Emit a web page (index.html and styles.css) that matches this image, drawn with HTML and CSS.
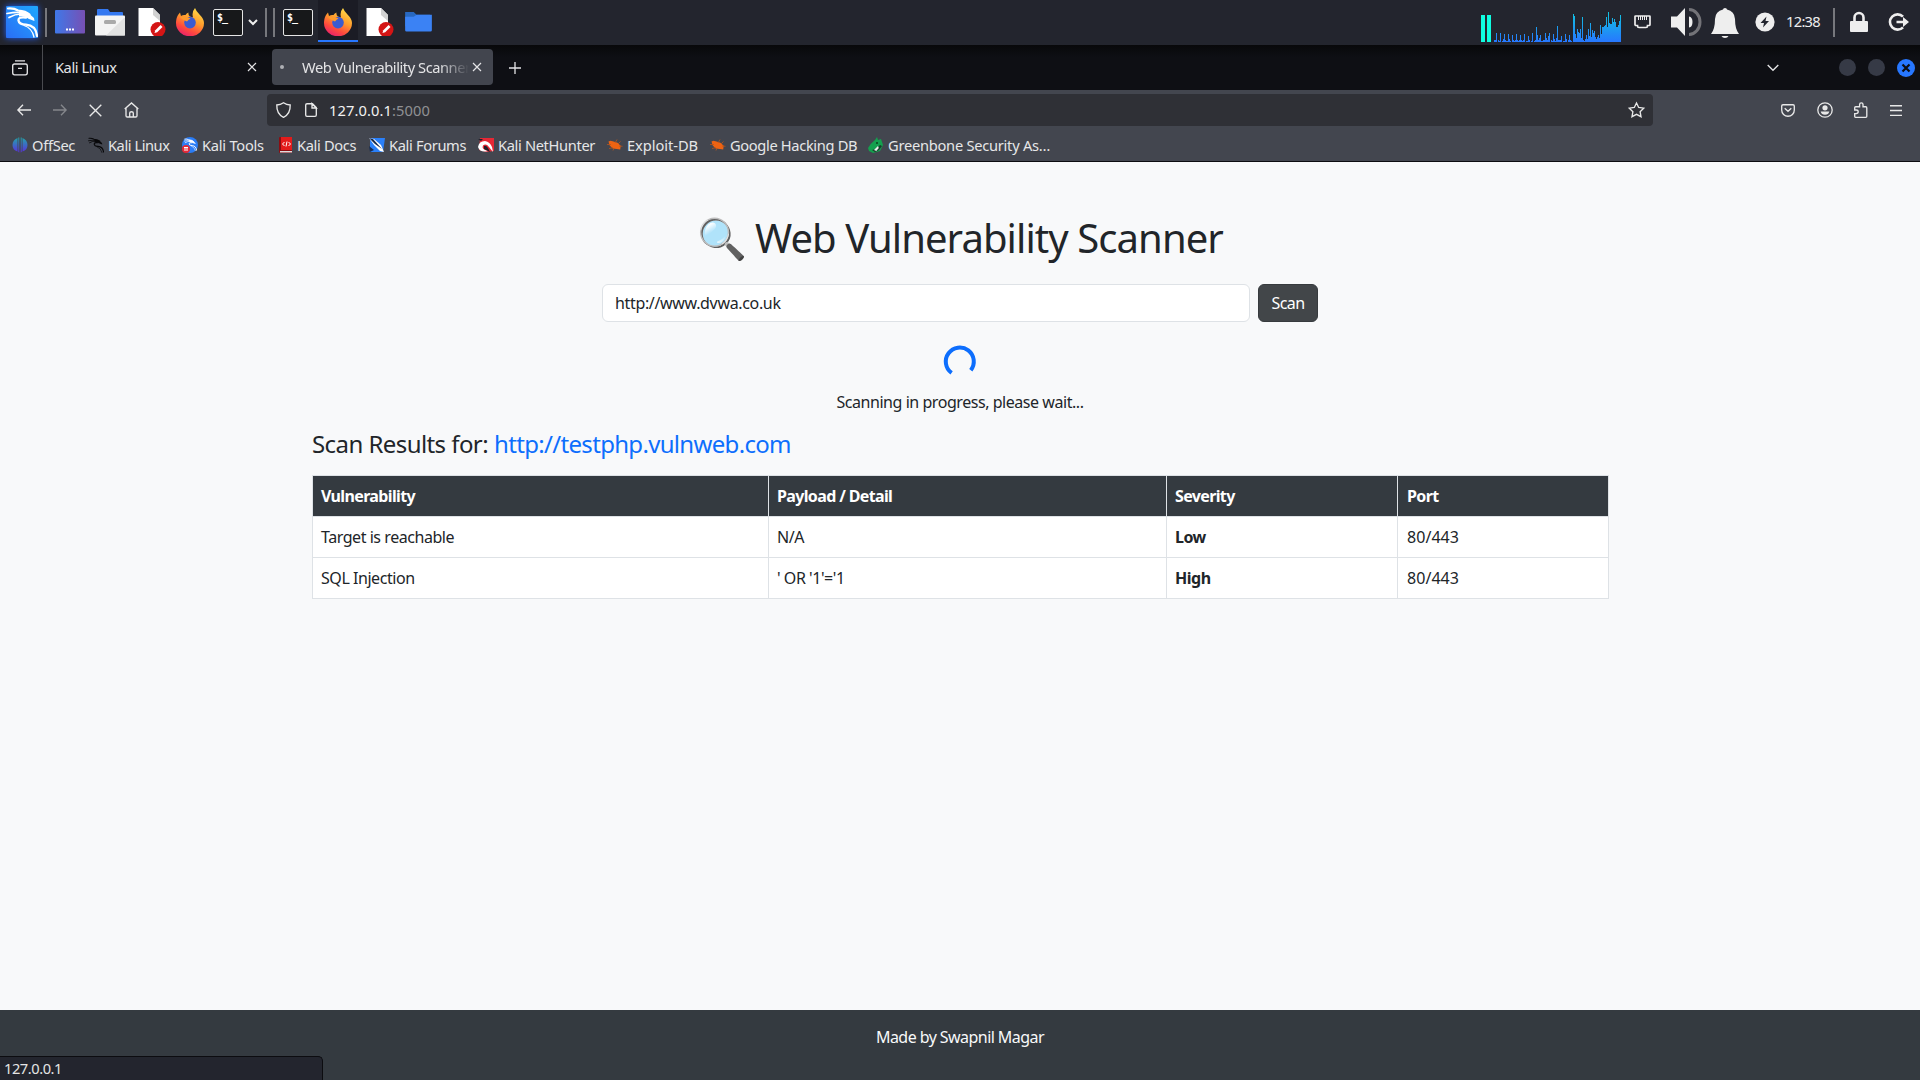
FILE: index.html
```html
<!DOCTYPE html>
<html lang="en">
<head>
<meta charset="utf-8">
<title>Web Vulnerability Scanner</title>
<link rel="stylesheet" href="styles.css">
</head>
<body>
<svg class="defs" width="0" height="0" aria-hidden="true">
  <defs>
    <linearGradient id="g-kali" x1="0" y1="1" x2="1" y2="0"><stop offset="0" stop-color="#2a6df5"/><stop offset="1" stop-color="#1fa8ff"/></linearGradient>
    <linearGradient id="g-desk" x1="0" y1="0" x2="1" y2="0"><stop offset="0" stop-color="#3f78e8"/><stop offset="1" stop-color="#7750b4"/></linearGradient>
    <linearGradient id="g-fox" x1=".8" y1="0" x2=".3" y2="1"><stop offset="0" stop-color="#ffe14a"/><stop offset=".45" stop-color="#ff9a2c"/><stop offset=".75" stop-color="#ff4a3d"/><stop offset="1" stop-color="#e8206c"/></linearGradient>
    <linearGradient id="g-cpu" gradientUnits="userSpaceOnUse" x1="0" y1="0" x2="0" y2="30"><stop offset="0" stop-color="#10c6e0"/><stop offset="1" stop-color="#2777ff"/></linearGradient>
    <linearGradient id="g-off" gradientUnits="userSpaceOnUse" x1="0" y1="0" x2="0" y2="16"><stop offset="0" stop-color="#1fa9a8"/><stop offset="1" stop-color="#5b2be0"/></linearGradient>
    <symbol id="dragon" viewBox="0 0 32 32">
      <path d="M2 2.500 Q8 2 12 4.500 Q20 5 23.500 8.500" fill="none" stroke="currentColor" stroke-width="2.200" stroke-linecap="round"/>
      <path d="M1 7.500 Q9 6 14 6.500 M3 11.500 Q9 8 15 8" fill="none" stroke="currentColor" stroke-width="1.700" stroke-linecap="round"/>
      <path d="M13 4.500 Q21 5 24 8.500 L28 12 L28.500 15 L23 13 Q19 9.500 13 10.500 Z" fill="currentColor"/>
      <path d="M20 11.500 Q12 10.500 12.500 14.500 Q13 18.500 20 18.700 Q30 19.500 31 30" fill="none" stroke="currentColor" stroke-width="2.300" stroke-linecap="round"/>
      <path d="M18 19.500 Q26 22 28 31" fill="none" stroke="currentColor" stroke-width="1.300" stroke-linecap="round"/>
    </symbol>
    <symbol id="firefox" viewBox="0 0 28 28">
      <path d="M19 0 Q20 3 23.500 6.500 Q28 11 28 15 A14 13.300 0 0 1 0 15 Q-.2 9 4 4.500 L5 8 Q7 6.500 9.500 7 Q10.500 5 12.500 4.500 Q12 7 14 8.500 L17 9.500 Q15.500 4 19 0Z" fill="url(#g-fox)"/>
      <circle cx="14" cy="14.600" r="5.800" fill="#3b5bd0"/>
      <path d="M4 9.500 Q9 7 14.500 10.500 Q12.500 11.500 11 13.500 Q7 12 4 9.500Z" fill="#ff9a2c"/>
    </symbol>
    <symbol id="doc" viewBox="0 0 28 28">
      <path d="M.5 0H15L22 7V28H.5Z" fill="#fff"/><path d="M15 0L22 7V13L15 7Z" fill="#d2d2d2"/>
      <circle cx="20" cy="21.500" r="7.500" fill="#d41515"/><path d="M16.500 25l.8-2.700 5.300-5.300 1.900 1.900-5.300 5.300z" fill="#fff"/>
    </symbol>
    <symbol id="close" viewBox="0 0 10 10"><path d="M1 1l8 8M9 1l-8 8" fill="none" stroke="currentColor" stroke-width="1.200"/></symbol>
    <symbol id="bug" viewBox="0 0 16 16"><path d="M1.500 4.500l2-.7 3 .7 4 1.200 3.200 3 -.5 3.800-3.500-.5-4-.5-3-3z" fill="#ee6312"/><path d="M0 7.500l4 0M2 11.500l4-.8M8 6l2-3.500M11 7l2.500-2.500M12 9l3.500.3M7 11l-1 2.500" stroke="#b9541c" stroke-width=".8"/></symbol>
  </defs>
</svg>

<header class="panel">
  <div class="slot w40"><svg class="kali" width="32" height="32" viewBox="0 0 32 32"><rect width="32" height="32" rx="1" fill="url(#g-kali)"/><use href="#dragon" class="white"/></svg></div>
  <div class="slot w10"><i class="sep"></i></div>
  <div class="slot w40"><svg width="30" height="24" viewBox="0 0 30 24"><rect width="30" height="23.500" rx="1" fill="url(#g-desk)"/><path d="M11 18.500h2v2h-2zm3 0h2v2h-2zm3 0h2v2h-2z" fill="#fff"/></svg></div>
  <div class="slot w40"><svg width="30" height="27" viewBox="0 0 30 27"><path d="M2 8V1q0-1 1-1h10l2 3h12q1 0 1 1v4z" fill="#3478f0"/><rect y="6.500" width="30" height="20" rx="1" fill="#f4f4f4"/><path d="M29 9L11 26.500H30V9z" fill="#e2e2e2"/><rect x="9" y="11" width="12" height="4" rx="1.500" fill="#aaa"/></svg></div>
  <div class="slot w40"><svg class="doc" width="28" height="28"><use href="#doc"/></svg></div>
  <div class="slot w40"><svg width="28" height="28"><use href="#firefox"/></svg></div>
  <div class="slot w34"><div class="term">$_</div></div>
  <div class="slot w14"><svg width="10" height="6" viewBox="0 0 10 6" class="line2"><path d="M1 1l4 4 4-4"/></svg></div>
  <div class="slot grips"><i class="sep thin"></i><i class="sep thin"></i></div>
  <div class="slot w40"><div class="term">$_</div></div>
  <div class="slot w40 running"><svg width="28" height="28"><use href="#firefox"/></svg></div>
  <div class="slot w40"><svg class="doc" width="28" height="28"><use href="#doc"/></svg></div>
  <div class="slot w40"><svg width="29" height="21" viewBox="0 0 30 22"><path d="M1 0h9l3 3h14l1 2v10H1z" fill="#2868c0"/><path d="M1 5h9l3-2h16v16q0 1.500-1.500 1.500h-25q-1.500 0-1.500-1.500z" fill="#3b82f4"/></svg></div>
  <div class="tray">
    <svg width="140" height="30" viewBox="0 0 140 30"><path d="M0 3h4v27H0zM6 3h4v27H6z" fill="#0ffde0"/>
      <g transform="translate(13 0)" stroke="url(#g-cpu)" fill="url(#g-cpu)">
        <path fill="none" d="M.5 30v-2M1.500 30v-2M2.500 30v-9M4.500 30v-2M5.500 30v-1M6.500 30v-9M8.500 30v-1M9.500 30v-3M10.500 30v-8M11.500 30v-2M12.500 30v-1M13.500 30v-1M14.500 30v-8M15.500 30v-3M16.500 30v-1M18.500 30v-7M19.500 30v-2M20.500 30v-1M21.500 30v-2M22.500 30v-8M23.500 30v-2M24.500 30v-1M25.500 30v-2M26.500 30v-7M27.500 30v-2M28.500 30v-1M29.500 30v-2M30.500 30v-8M32.500 30v-1M33.500 30v-1M34.500 30v-6M35.500 30v-2M37.500 30v-1M38.500 30v-9M40.500 30v-1M41.500 30v-2M42.500 30v-15M43.500 30v-7M44.500 30v-2M45.500 30v-4M46.500 30v-7M47.500 30v-1M48.500 30v-1M49.500 30v-2M50.500 30v-2M51.500 30v-9M52.500 30v-4M53.500 30v-2M54.500 30v-6M55.500 30v-9M57.500 30v-2M58.500 30v-1M59.500 30v-8M60.500 30v-3M61.500 30v-1M62.500 30v-4M63.500 30v-16M64.500 30v-2M65.500 30v-2M66.500 30v-2M67.500 30v-6M69.500 30v-1M70.500 30v-1M71.500 30v-8M72.500 30v-3M74.500 30v-2M75.500 30v-7M76.500 30v-2M77.500 30v-1"/>
        <path stroke="none" d="M79 30V2h1v2h1v18h1v4h1v-9h1v3h1v1h1v-4h1v9h1V5h1v23h1v1h1v-2h1v-4h1v4h1v-10h1v7h1v-13h1v14h1v-7h1v3h1v-2h1v6h1v2h1v-2h1v-2h1v3h1v-13h1v9h1v-7h2v-1h1v-1h1V5h1v10h1V0h1v11h1v1h2V6h1v4h1V7h1v3h1v5h2v-2h1V9h1V3h1v27z"/>
      </g></svg>
    <svg class="net" width="17" height="14" viewBox="0 0 17 14"><path d="M1.500 1h14q.5 0 .5.500v8q0 1-1 1h-1.500v.5q0 1.500-1.500 1.500H5q-1.500 0-1.500-1.500v-.5H2q-1 0-1-1v-8q0-.5.500-.5z" fill="none" stroke="#eee" stroke-width="1.700"/><path d="M4.500 1v4M6.500 1v4M8.500 1v4M10.500 1v4M12.500 1v4" stroke="#eee"/></svg>
    <svg class="vol" width="30" height="28" viewBox="0 0 30 28"><path d="M0 8.500h6l8-8.500v28l-8-8.500H0z" fill="#eee"/><path d="M18 8.500Q21.500 9 21.500 14T18 19.500z" fill="#eee"/><path d="M18 1.500a11 12.500 0 0 1 0 25" fill="none" stroke="#737378" stroke-width="3"/></svg>
    <svg class="bell" width="28" height="30" viewBox="0 0 28 30"><path d="M14 0q2 0 2 1.500 7.500 1.500 8 9.500 0 10 4 15H0q4-5 4-15 .5-8 8-9.500Q12 0 14 0zM10.500 28h7q-1 2-3.500 2t-3.500-2z" fill="#eee"/></svg>
    <svg class="power" width="20" height="20" viewBox="0 0 20 20"><circle cx="10" cy="10" r="9.600" fill="#eee"/><path d="M11.500 4.500l-6 6.500h3.500l-1 4.500 6-6.500h-3.500z" fill="#23252e"/></svg>
    <span class="clock">12:38</span>
    <i class="sep tray-sep"></i>
    <svg class="lock" width="18" height="20" viewBox="0 0 18 20"><rect y="9" width="18" height="11" rx="1" fill="#eee"/><path d="M4.500 10V5.500a4.500 4.500 0 0 1 9 0V10" fill="none" stroke="#eee" stroke-width="2.600"/></svg>
    <svg width="20" height="18" viewBox="0 0 20 18"><path d="M14 3.700A7.600 7.600 0 1 0 14 14.300" fill="none" stroke="#eee" stroke-width="2.600"/><path d="M7.500 7.700H14V4l6 5-6 5v-3.700H7.500z" fill="#eee"/></svg>
  </div>
</header>

<nav class="tabs">
  <div class="tab-view"><svg width="16" height="16" viewBox="0 0 16 16" class="line"><path d="M3 .8h10M2.500 4h11q1.800 0 1.800 1.800v7q0 2-1.800 2h-11q-1.800 0-1.800-2v-7Q.7 4 2.500 4zM6 8.300h4" /></svg></div>
  <div class="tab"><span class="tab-title">Kali Linux</span><svg width="10" height="10"><use href="#close"/></svg></div>
  <div class="tab active"><i class="dot"></i><span class="tab-title fade">Web Vulnerability Scanner</span><svg width="10" height="10"><use href="#close"/></svg></div>
  <svg class="plus" width="12" height="12" viewBox="0 0 12 12"><path d="M6 0v12M0 6h12" stroke="currentColor" stroke-width="1.300"/></svg>
  <div class="window-controls">
    <svg class="line all-tabs" width="12" height="8" viewBox="0 0 12 8"><path d="M.7 1L6 6.300 11.300 1"/></svg>
    <i class="win"></i><i class="win"></i><i class="win shut"><svg width="10" height="10" viewBox="0 0 10 10"><path d="M1.500 1.500l7 7M8.500 1.500l-7 7" stroke="#0c0d12" stroke-width="2.200"/></svg></i>
  </div>
</nav>

<div class="toolbar">
  <div class="slot w36"><svg class="line" width="14" height="12" viewBox="0 0 14 12"><path d="M14 6H1M6 .8L.9 6 6 11.200"/></svg></div>
  <div class="slot w36 off"><svg class="line" width="14" height="12" viewBox="0 0 14 12"><path d="M0 6h13M8 .8L13.100 6 8 11.200"/></svg></div>
  <div class="slot w36"><svg class="line stop" width="13" height="13" viewBox="0 0 13 13"><path d="M.7.7l11.600 11.600M12.300.7L.7 12.300"/></svg></div>
  <div class="slot w36"><svg class="line home" width="15" height="16" viewBox="0 0 15 16"><path d="M.7 7L7.500.9 14.300 7M2 6.200v7.500q0 1.300 1.300 1.300h8.400q1.300 0 1.300-1.300V6.200M5.700 15v-4q0-1.300 1.800-1.300T9.300 11v4"/></svg></div>
  <div class="urlbar">
    <svg class="line" width="15" height="16" viewBox="0 0 15 16"><path d="M7.500.8q3 2.200 6.700 2.200.3 9-6.700 12.300Q.5 12 .8 3q3.700 0 6.700-2.200z"/></svg>
    <svg class="line page" width="12" height="14" viewBox="0 0 12 14"><path d="M2 .7h5.500l3.800 3.800V12q0 1.300-1.300 1.300H2Q.7 13.300.7 12V2Q.7.7 2 .7zM7 .7v4.300h4.300z"/></svg>
    <span class="url">127.0.0.1<span class="port">:5000</span></span>
    <svg class="line star" width="17" height="16" viewBox="0 0 17 16"><path d="M8.500 1l2.200 4.500 5 .7-3.600 3.500.9 5-4.500-2.400L4 14.700l.9-5L1.300 6.200l5-.7z"/></svg>
  </div>
  <div class="actions">
    <svg class="line" width="14" height="13" viewBox="0 0 14 13"><path d="M2 .7h10q1.300 0 1.300 1.300v4a6.300 6.300 0 0 1-12.600 0V2Q.7.7 2 .7zM3.700 4.300L7 7.300l3.300-3"/></svg>
    <svg width="16" height="16" viewBox="0 0 16 16"><circle cx="8" cy="8" r="7.200" fill="none" stroke="currentColor" stroke-width="1.300"/><circle cx="8" cy="5.800" r="2.600" fill="currentColor"/><path d="M3.700 9.500h8.600Q11.500 12.700 8 12.700T3.700 9.500z" fill="currentColor"/></svg>
    <svg class="line" width="14" height="16" viewBox="0 0 14 16"><path d="M1.500 15.300h10.300q1 0 1-1V6q0-1.300-1-1.300H9V2.500Q9 .8 7.300.8T5.600 2.500v2.200H1.700q-1 0-1 1V8h1.500q2 0 2 1.800t-2 1.800H.7v2.900q0 .8.8.8z"/></svg>
    <svg class="line" width="12" height="11" viewBox="0 0 12 11"><path d="M0 .7h12M0 5.500h12M0 10.300h12"/></svg>
  </div>
</div>

<div class="bookmarks">
  <a class="bm b1"><svg width="16" height="16" viewBox="0 0 16 16"><path d="M5.500 1v13.500Q.5 13 .5 8t5-7zM6.300.6h1V15.500l-1-.6zM8.700.6h1v14.300l-1 .6zM10.500 1q5 2 5 7t-5 6.500z" fill="url(#g-off)"/></svg><span>OffSec</span></a>
  <a class="bm b2"><svg width="16" height="16" class="black"><use href="#dragon"/></svg><span>Kali Linux</span></a>
  <a class="bm b3"><svg width="16" height="16" viewBox="0 0 16 16"><circle cx="8" cy="8" r="8" fill="#2a7cf5"/><svg x="2" y="1" width="13" height="13" class="white"><use href="#dragon"/></svg><circle cx="4" cy="12" r="4" fill="#e42a38"/><path d="M2 10.500h4M3 10.500v3.500M5 10.500v3.500" stroke="#fff"/></svg><span>Kali Tools</span></a>
  <a class="bm b4"><svg width="13" height="16" viewBox="0 0 13 16"><rect width="13" height="16" rx="1" fill="#8b0d12"/><path d="M2 0h11v13H2z" fill="#e31b1b"/><path d="M1 14h12v1.500H1z" fill="#ddd"/><path d="M5.500 5l-2 2 2 2M9.500 5l2 2-2 2M8 4.500l-1 5" fill="none" stroke="#fff"/></svg><span>Kali Docs</span></a>
  <a class="bm b5"><svg width="16" height="16" viewBox="0 0 16 16"><path d="M1 1h15l-2 14H1z" fill="#2a80fa"/><path d="M0 1l5 1 7 6 3 7-4-1-6-6z" fill="#fff"/><path d="M0 1l4 1 9 10-7-5zM0 9l5 4-4 2z" fill="#192c50"/></svg><span>Kali Forums</span></a>
  <a class="bm b6"><svg width="16" height="16" viewBox="0 0 16 16"><path d="M2 1h14v13l-8 1-7-2z" fill="#e52835"/><path d="M0 10Q1 4 7 4q5 1 7 6l1 5-4-5Q8 6 5 8.500 3 12 10 14 2 16 0 10z" fill="#fff"/><path d="M0 2l5 0-2 2zM6 9q2-1 4 2l2 4-6-3z" fill="#20202a"/></svg><span>Kali NetHunter</span></a>
  <a class="bm b7"><svg width="16" height="16"><use href="#bug"/></svg><span>Exploit-DB</span></a>
  <a class="bm b8"><svg width="16" height="16"><use href="#bug"/></svg><span>Google Hacking DB</span></a>
  <a class="bm b9"><svg width="16" height="16" viewBox="0 0 16 16"><path d="M0 11q3-5 7-8l2-3 1 3 3-1 2 6-3 6-7 2-4-2z" fill="#14a04e"/><path d="M4 13l4-1 4-4 2 1-3 4-4 2z" fill="#173b29"/><path d="M6 13l4-4 .8 2-2.500 3z" fill="#eee"/><circle cx="9" cy="6" r="1" fill="#0b4020"/></svg><span>Greenbone Security As…</span></a>
</div>

<main class="page-body">
  <h1><span class="emoji">🔍</span> Web Vulnerability Scanner</h1>
  <form class="scan-form">
    <div class="field">http://www.dvwa.co.uk</div>
    <div class="button"><span>Scan</span></div>
  </form>
  <div class="progress">
    <svg width="32" height="32" viewBox="0 0 32 32"><path d="M7.600 27.900A14 14 0 1 1 26.800 25.200" fill="none" stroke="#0d6efd" stroke-width="4"/></svg>
    <p>Scanning in progress, please wait...</p>
  </div>
  <h4><span class="for">Scan Results for:</span><span class="target">http://testphp.vulnweb.com</span></h4>
  <table>
    <colgroup><col class="c1"><col class="c2"><col class="c3"><col class="c4"></colgroup>
    <thead><tr><th>Vulnerability</th><th>Payload / Detail</th><th>Severity</th><th>Port</th></tr></thead>
    <tbody>
      <tr><td>Target is reachable</td><td>N/A</td><td><b>Low</b></td><td class="num">80/443</td></tr>
      <tr><td>SQL Injection</td><td>' OR '1'='1</td><td><b>High</b></td><td class="num">80/443</td></tr>
    </tbody>
  </table>
</main>
<footer>Made by Swapnil Magar</footer>
<div class="status">127.0.0.1</div>
</body>
</html>
```
FILE: styles.css
```css
* { box-sizing: border-box; }
body {
  margin: 0; width: 1920px; height: 1080px; overflow: hidden;
  display: flex; flex-direction: column;
  font: 16px/24px "Noto Sans", sans-serif; letter-spacing: -0.45px;
  color: #212529; background: #f8f9fa;
}
.defs { position: absolute; }
svg { display: block; flex: none; overflow: visible; }
.white { color: #fff; }
.black { color: #08080a; }
.line { fill: none; stroke: currentColor; stroke-width: 1.35; }
.line2 { fill: none; stroke: #eee; stroke-width: 2; }

/* Desktop panel */
.panel { height: 45px; flex: none; display: flex; background: #23252e; padding-left: 2px; }
.slot { flex: none; display: flex; align-items: center; justify-content: center; }
.panel .slot { height: 44px; }
.w10 { width: 8px; } .w14 { width: 14px; } .w34 { width: 36px; } .w36 { width: 36px; } .w40 { width: 40px; }
.kali { filter: drop-shadow(0 0 3px #1f5fff); }
.sep { width: 2px; height: 29px; background: #77787d; }
.panel .grips { width: 18px; gap: 6px; padding-left: 2px; }
.doc { margin-left: 4px; }
.term {
  width: 30px; height: 27px; border: 1.500px solid #e6e6e6; border-radius: 2px; background: #17181a;
  color: #fff; font: bold 10px/12px "DejaVu Sans Mono", monospace; letter-spacing: -1px; padding: 2px 0 0 3px;
}
.panel .running { background: #1b1c25; box-shadow: inset 0 -2px #2777ff; height: 42px; padding-top: 2px; }
.tray { margin-left: auto; height: 44px; display: flex; align-items: center; padding-right: 11px; color: #eee; }
.tray > svg:first-child { margin-top: 10px; }
.net { margin-left: 13px; } .vol { margin-left: 20px; } .bell { margin: 2px 0 0 10px; } .power { margin-left: 16px; }
.clock { margin: -2px 0 0 11px; width: 35px; font-size: 14.670px; letter-spacing: -0.69px; }
.tray-sep { margin-left: 12px; } .lock { margin: 0 21px 0 15px; }

/* Browser tabs */
.tabs { height: 45px; flex: none; display: flex; align-items: center; background: linear-gradient(#08080a, #0e0f14 12px); color: #e4e4e6; font-size: 14.670px; }
.tab-view { width: 43px; height: 45px; border-right: 1px solid #4a4b50; padding-left: 12px; display: flex; align-items: center; }
.tab { width: 229px; display: flex; align-items: center; padding: 0 15px 0 12px; margin-top: -1px; }
.tab-title { flex: 1; white-space: nowrap; overflow: hidden; }
.tab.active { width: 221px; height: 36px; border-radius: 4px; background: #42454e; padding: 0 11px 0 8px; }
.dot { width: 4px; height: 4px; border-radius: 2px; background: #aeb0b4; margin-right: 18px; }
.fade { margin-right: 3px; mask-image: linear-gradient(90deg, #000 82%, transparent); }
.plus { margin-left: 16px; margin-top: 1px; }
.window-controls { margin-left: auto; display: flex; align-items: center; padding-right: 5px; }
.all-tabs { margin-right: 60px; }
.win { width: 17px; height: 17px; border-radius: 50%; background: #363a46; margin-right: 12px; }
.win.shut { width: 18px; height: 18px; background: #2777ff; margin: 0; display: grid; place-items: center; }

/* Navigation */
.toolbar { height: 40px; flex: none; display: flex; align-items: center; background: #43464f; color: #e8e8e8; padding-left: 6px; }
.off { color: #85878c; }
.stop { margin-right: 1px; } .home { margin-right: 1px; }
.urlbar { width: 1386px; height: 32px; margin-left: 117px; border-radius: 4px; background: #2f3036; display: flex; align-items: center; padding: 0 8px 0 9px; }
.page { margin-left: 14px; }
.url { margin-left: 12px; font-size: 14.670px; letter-spacing: 0.1px; color: #f2f2f2; }
.port { color: #8f9094; }
.star { margin-left: auto; }
.actions { flex: 1; display: flex; align-items: center; justify-content: space-between; padding: 0 18px 0 128px; }

/* Bookmarks */
.bookmarks { height: 32px; flex: none; display: flex; background: #43464f; border-bottom: 1px solid #0c0c10; color: #e6e6e8; font-size: 14.670px; padding-left: 12px; }
.bm { display: flex; align-items: center; white-space: nowrap; height: 30px; }
.bm span { margin: -1px 0 0 4px; }
.b1 { width: 76px; letter-spacing: -0.3px; } .b2 { width: 94px; } .b3 { width: 97px; } .b4 { width: 90px; }
.b5 { width: 109px; } .b6 { width: 129px; } .b7 { width: 103px; } .b8 { width: 158px; }
.b3 { letter-spacing: -0.25px; } .b4, .b5, .b6, .b8 { letter-spacing: -0.35px; }
.b7 { letter-spacing: -0.05px; } .b9 { letter-spacing: -0.26px; }
.b4 span { margin-left: 5px; }

/* Page */
.page-body { flex: 1; width: 1296px; margin: 0 auto; padding-top: 48px; }
h1 { margin: 0 0 26px; font-size: 40px; line-height: 48px; height: 48px; padding-top: 4px; font-weight: 400; text-align: center; letter-spacing: -0.92px; }
.emoji { letter-spacing: -1.500px; }
.scan-form { display: flex; justify-content: center; gap: 8px; height: 38px; margin: 0; }
.field { width: 648px; border: 1px solid #dee2e6; border-radius: 6px; background: #fff; padding: 6px 12px; letter-spacing: -0.34px; }
.button { width: 60px; border: 1px solid #373b3e; border-radius: 6px; background: #424649; color: #fff; line-height: 36px; text-align: center; letter-spacing: -0.58px; }
.progress { margin-top: 23px; display: flex; flex-direction: column; align-items: center; }
.progress p { margin: 13px 0 0; }
h4 { margin: 16px 0 16px; font-size: 24px; line-height: 28px; height: 29px; font-weight: 400; display: flex; gap: 6px; white-space: nowrap; }
.for { letter-spacing: -0.57px; } .target { color: #0d6efd; letter-spacing: -0.68px; }
table { width: 1296px; table-layout: fixed; border-collapse: collapse; background: #fff; }
.c1 { width: 456px; } .c2 { width: 398px; } .c3 { width: 231px; } .c4 { width: 211px; }
th, td { height: 41px; padding: 8px; border: 1px solid #dee2e6; text-align: left; }
th { background: #343a40; color: #fff; letter-spacing: -0.64px; }
b { letter-spacing: -0.5px; } .num { letter-spacing: 0.05px; padding-left: 9px; }
th:last-child { padding-left: 9px; }
footer { height: 70px; flex: none; background: #343a40; color: #f8f9fa; text-align: center; padding-top: 15px; letter-spacing: -0.56px; }
.status {
  position: absolute; left: 0; bottom: 0; width: 323px; height: 24px; background: #23252e; color: #e4e4e4; line-height: 22px;
  border: 1px solid #0c0c10; border-width: 1px 1px 0 0; border-radius: 0 5px 0 0; padding-left: 4px; font-size: 14.670px; letter-spacing: -0.45px;
}
```
